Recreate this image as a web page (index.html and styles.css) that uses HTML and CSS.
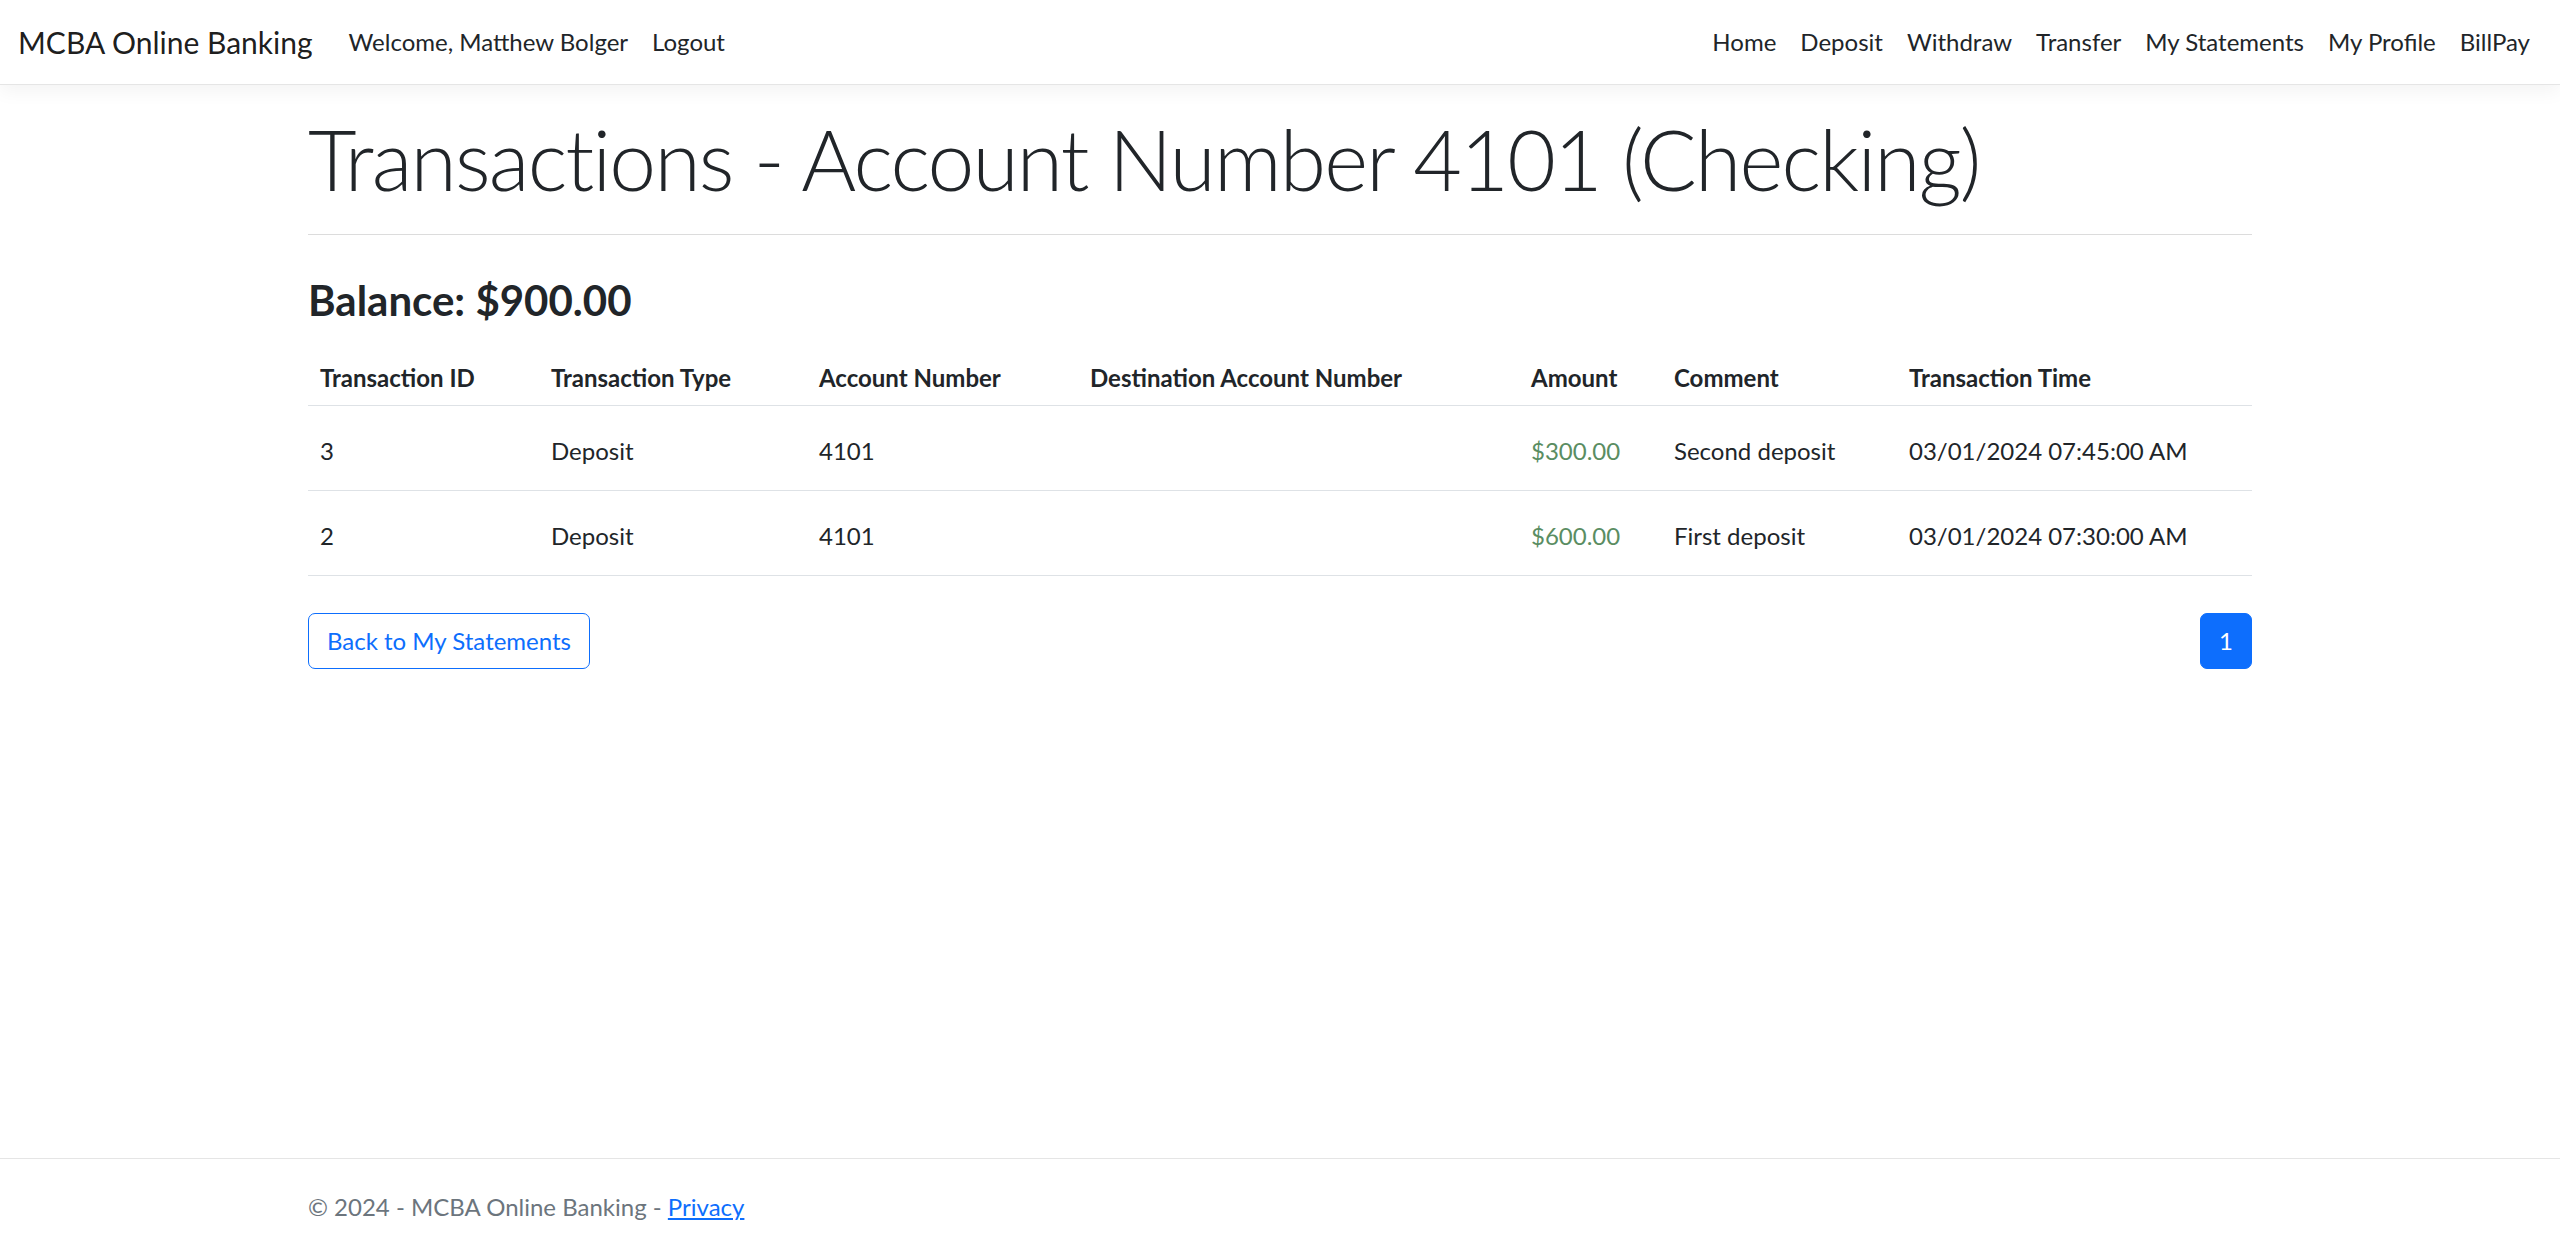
FILE: index.html
```html
<!DOCTYPE html>
<html lang="en">
<head>
<meta charset="utf-8">
<title>Transactions - MCBA Online Banking</title>
<link rel="stylesheet" href="styles.css">
</head>
<body>
<header class="site-header">
  <nav class="navbar">
    <a class="brand" href="#">MCBA Online Banking</a>
    <ul class="nav nav-left">
      <li><span class="nav-link">Welcome, Matthew Bolger</span></li>
      <li><a class="nav-link" href="#">Logout</a></li>
    </ul>
    <ul class="nav nav-right">
      <li><a class="nav-link" href="#">Home</a></li>
      <li><a class="nav-link" href="#">Deposit</a></li>
      <li><a class="nav-link" href="#">Withdraw</a></li>
      <li><a class="nav-link" href="#">Transfer</a></li>
      <li><a class="nav-link" href="#">My Statements</a></li>
      <li><a class="nav-link" href="#">My Profile</a></li>
      <li><a class="nav-link" href="#">BillPay</a></li>
    </ul>
  </nav>
</header>

<main class="container main">
  <h1 class="display-title">Transactions - Account Number 4101 (Checking)</h1>
  <hr class="rule">
  <h3 class="balance">Balance: $900.00</h3>
  <table class="table">
    <thead>
      <tr>
        <th class="c-id">Transaction ID</th>
        <th class="c-type">Transaction Type</th>
        <th class="c-acc">Account Number</th>
        <th class="c-dest">Destination Account Number</th>
        <th class="c-amt">Amount</th>
        <th class="c-com">Comment</th>
        <th class="c-time">Transaction Time</th>
      </tr>
    </thead>
    <tbody>
      <tr>
        <td>3</td>
        <td>Deposit</td>
        <td>4101</td>
        <td></td>
        <td class="amount">$300.00</td>
        <td>Second deposit</td>
        <td>03/01/2024 07:45:00 AM</td>
      </tr>
      <tr>
        <td>2</td>
        <td>Deposit</td>
        <td>4101</td>
        <td></td>
        <td class="amount">$600.00</td>
        <td>First deposit</td>
        <td>03/01/2024 07:30:00 AM</td>
      </tr>
    </tbody>
  </table>
  <div class="actions">
    <a class="btn-outline" href="#">Back to My Statements</a>
    <ul class="pagination">
      <li><span class="page-link active">1</span></li>
    </ul>
  </div>
</main>

<footer class="footer">
  <div class="container">&copy; 2024 - MCBA Online Banking - <a href="#" class="footer-link">Privacy</a></div>
</footer>
</body>
</html>
```

FILE: styles.css
```css
* { box-sizing: border-box; }

html, body { margin: 0; padding: 0; }

body {
  font-family: "Lato", "Open Sans", sans-serif;
  font-size: 24px;
  line-height: 36px;
  color: #212529;
  background: #fff;
  min-height: 100vh;
  display: flex;
  flex-direction: column;
}

a { text-decoration: none; }

.site-header {
  background: #fff;
  border-bottom: 1px solid #e5e5e5;
  box-shadow: 0 6px 18px rgba(0, 0, 0, 0.05);
  margin-bottom: 24px;
}

.navbar {
  display: flex;
  align-items: center;
  padding: 12px 18px;
}

.brand {
  font-size: 30px;
  line-height: 45px;
  padding: 7.5px 0;
  margin-right: 24px;
  color: rgba(0, 0, 0, 0.9);
}

.nav {
  list-style: none;
  margin: 0;
  padding: 0;
  display: flex;
}

.nav-right { margin-left: auto; }

.nav-link {
  display: block;
  padding: 12px;
  color: #212529;
}

.container {
  width: 1980px;
  margin: 0 auto;
  padding: 0 18px;
}

.main { padding-bottom: 24px; }

.display-title {
  font-size: 84px;
  font-weight: 300;
  line-height: 1.2;
  letter-spacing: -1.8px;
  margin: 0 0 12px;
}

.rule {
  margin: 24px 0;
  border: 0;
  border-top: 1px solid #dcdcdc;
}

.balance {
  font-size: 42px;
  font-weight: 700;
  line-height: 1.2;
  margin: 40px 0 20px;
}

.table {
  width: 100%;
  border-collapse: collapse;
  table-layout: fixed;
  margin-bottom: 24px;
}

.table th {
  text-align: left;
  font-weight: 700;
  padding: 15px 12px 9px;
  border-bottom: 1px solid #dee2e6;
  white-space: nowrap;
}

.table td {
  padding: 27px 12px 21px;
  border-bottom: 1px solid #dee2e6;
}

.c-id { width: 231px; }
.c-type { width: 268px; }
.c-acc { width: 271px; }
.c-dest { width: 441px; }
.c-amt { width: 143px; }
.c-com { width: 235px; }
.c-time { width: auto; }

.amount { color: #5a8d62; }

.actions {
  display: flex;
  justify-content: space-between;
  align-items: flex-start;
  margin-top: 37px;
}

.btn-outline {
  display: inline-block;
  padding: 9px 18px;
  border: 1px solid #0d6efd;
  border-radius: 7px;
  color: #0d6efd;
  font-size: 24px;
  line-height: 36px;
}

.pagination {
  list-style: none;
  margin: 0;
  padding: 0;
  display: flex;
}

.page-link {
  display: block;
  padding: 9px 18px;
  border: 1px solid #0d6efd;
  border-radius: 7px;
  line-height: 36px;
}

.page-link.active {
  background: #0d6efd;
  color: #fff;
}

.footer {
  margin-top: auto;
  border-top: 1px solid #e5e5e5;
  color: #6c757d;
  padding-top: 10px;
  line-height: 76px;
  white-space: nowrap;
}

.footer-link {
  color: #0d6efd;
  text-decoration: underline;
}
```
